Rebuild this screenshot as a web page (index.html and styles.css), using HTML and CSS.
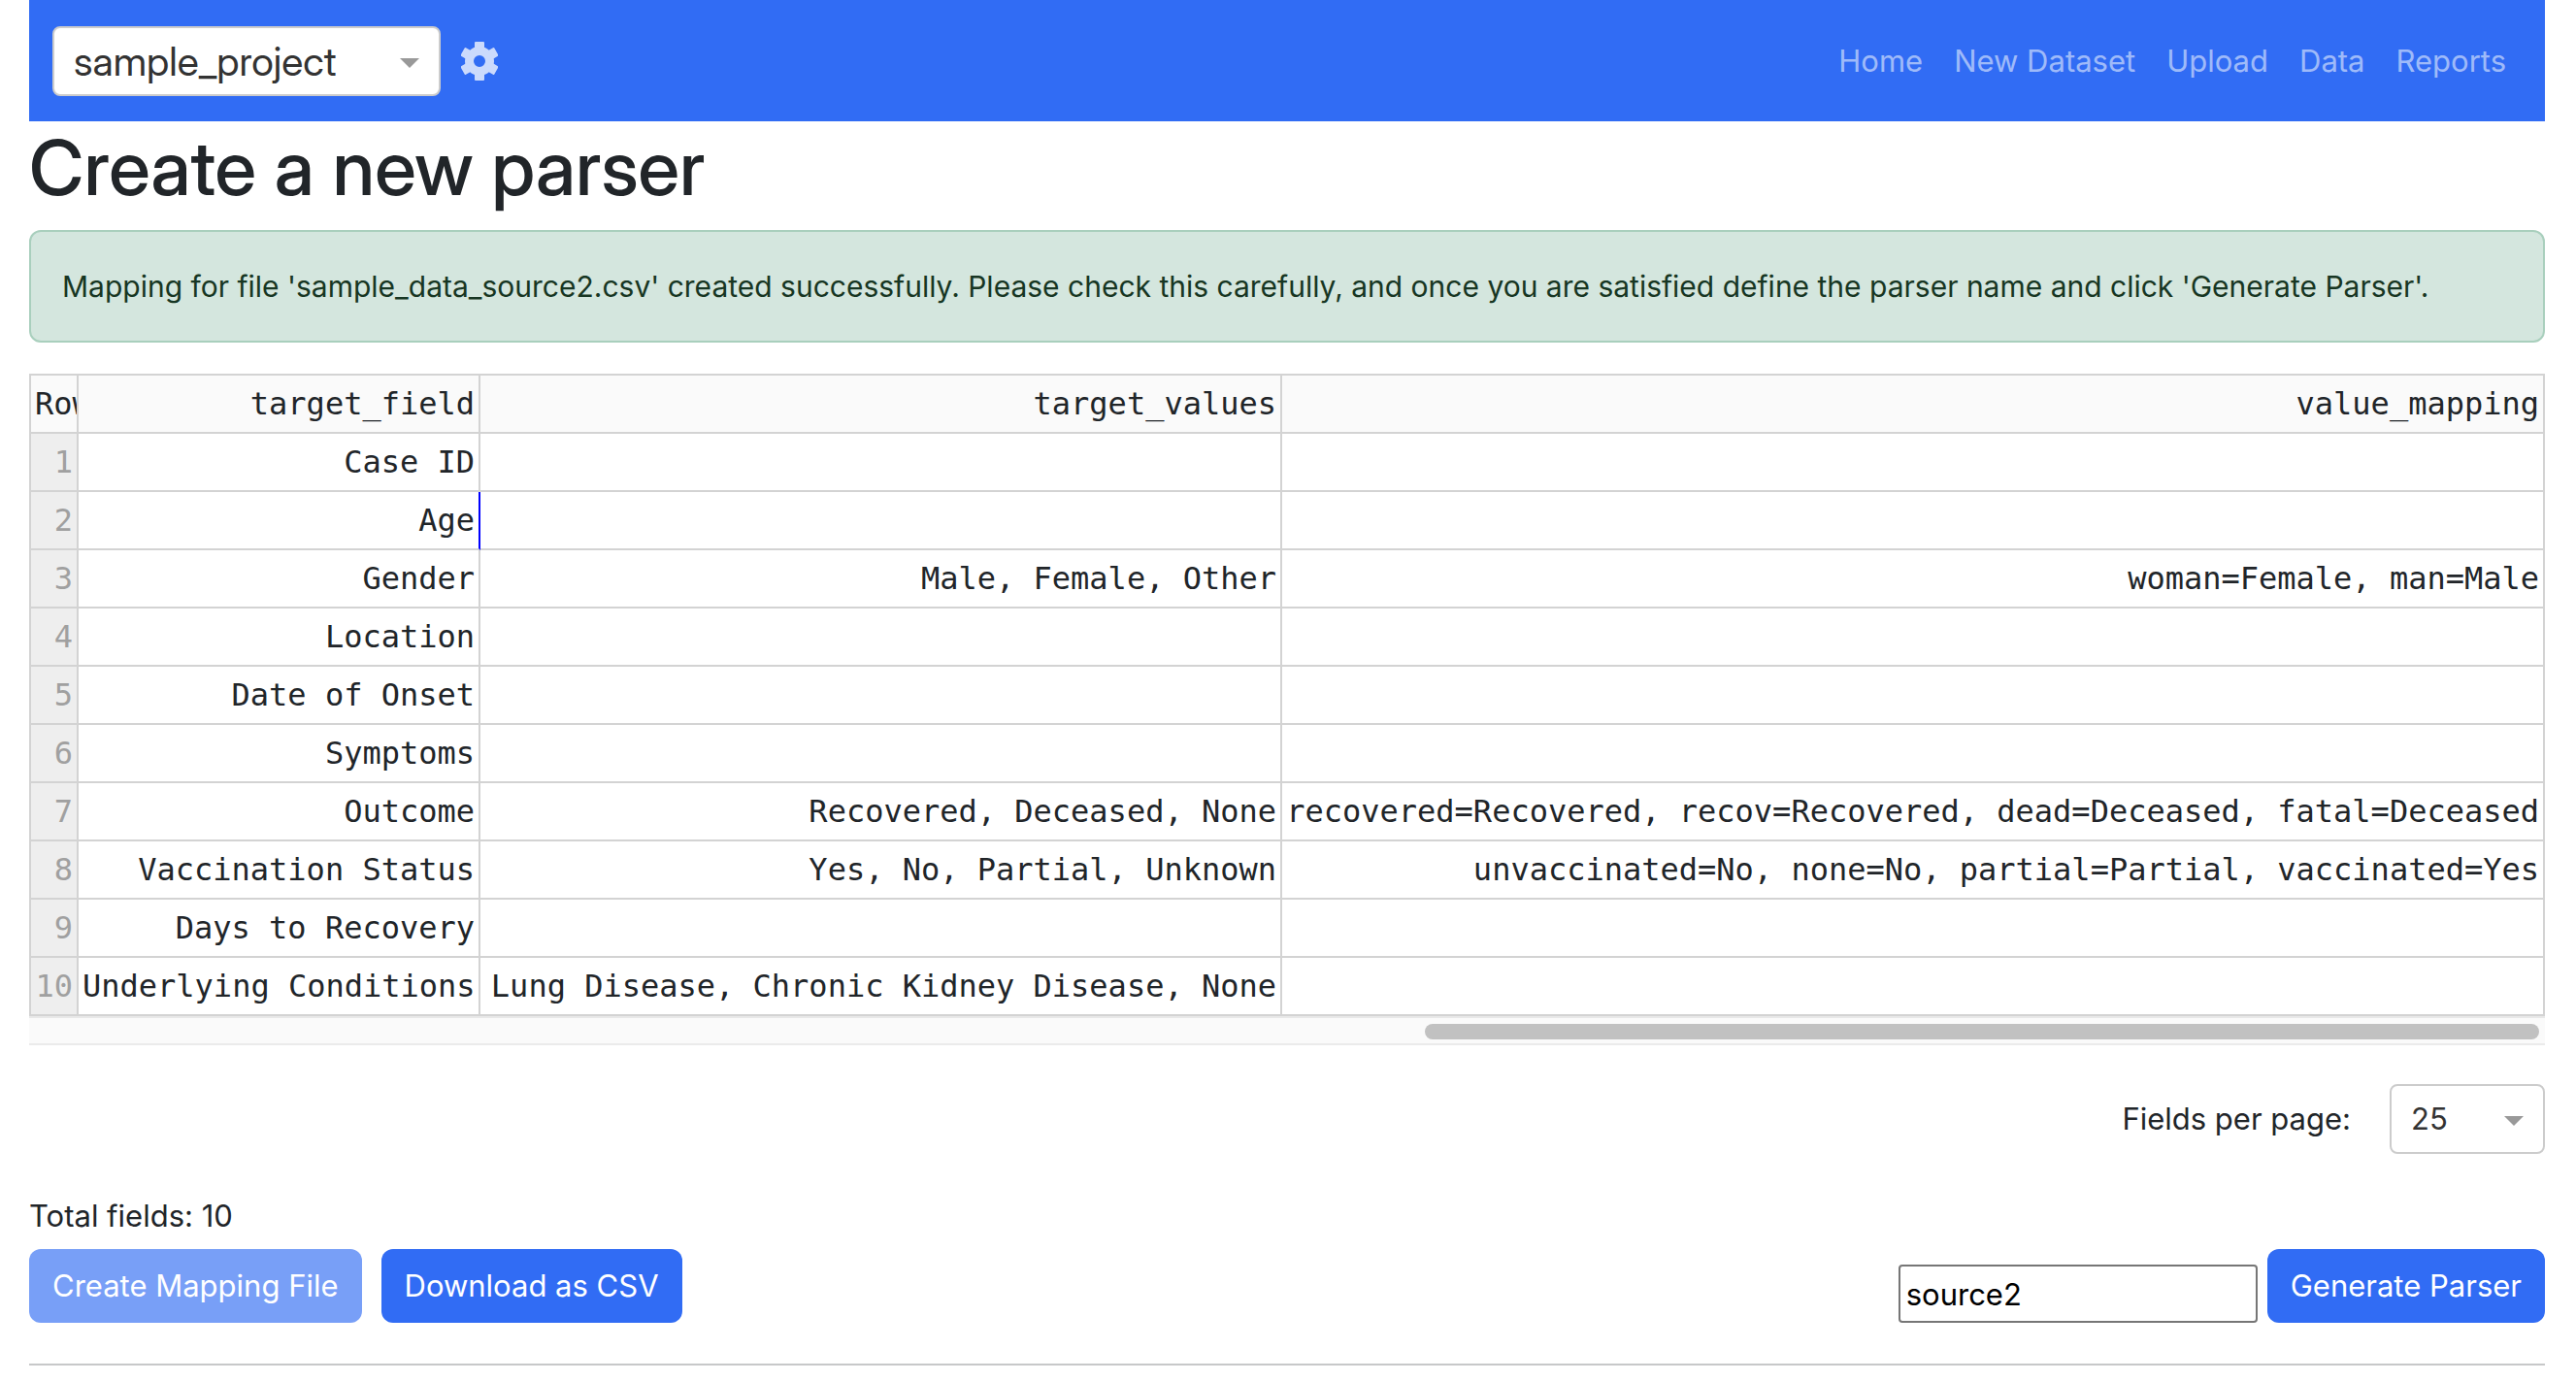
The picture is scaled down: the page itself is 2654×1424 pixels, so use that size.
FILE: index.html
```html
<!DOCTYPE html>
<html lang="en">
<head>
<meta charset="utf-8">
<meta name="viewport" content="width=device-width, initial-scale=1">
<title>Create a new parser</title>
<link rel="stylesheet" href="styles.css">
</head>
<body>
<header class="navbar">
  <div class="project">
    <span class="dropdown dropdown-project">
      <select aria-label="Project"><option>sample_project</option></select>
      <svg class="caret" viewBox="0 0 20 10" aria-hidden="true"><path d="M0 0h20L10 10z"/></svg>
    </span>
    <a class="settings" href="#" aria-label="Settings">
      <svg viewBox="-57 -60 114 120" aria-hidden="true">
        <circle r="31.5" fill="none" stroke="#fff" stroke-width="27"/>
        <g fill="#fff">
          <rect x="-15" y="-60" width="30" height="30" rx="3"/>
          <rect x="-15" y="-60" width="30" height="30" rx="3" transform="rotate(60)"/>
          <rect x="-15" y="-60" width="30" height="30" rx="3" transform="rotate(120)"/>
          <rect x="-15" y="-60" width="30" height="30" rx="3" transform="rotate(180)"/>
          <rect x="-15" y="-60" width="30" height="30" rx="3" transform="rotate(240)"/>
          <rect x="-15" y="-60" width="30" height="30" rx="3" transform="rotate(300)"/>
        </g>
      </svg>
    </a>
  </div>
  <nav class="links">
    <a href="#">Home</a>
    <a href="#">New Dataset</a>
    <a href="#">Upload</a>
    <a href="#">Data</a>
    <a href="#">Reports</a>
  </nav>
</header>
<main>
  <h1>Create a new parser</h1>
  <div class="alert" role="status">Mapping for file 'sample_data_source2.csv' created successfully. Please check this carefully, and once you are satisfied define the parser name and click 'Generate Parser'.</div>
  <div class="table-view">
    <table>
      <colgroup><col class="col-row"><col class="col-field"><col class="col-values"><col></colgroup>
      <thead>
        <tr><th class="row-head" scope="col">Row</th><th scope="col">target_field</th><th scope="col">target_values</th><th scope="col">value_mapping</th></tr>
      </thead>
      <tbody>
        <tr><th scope="row">1</th><td>Case ID</td><td></td><td></td></tr>
        <tr><th scope="row">2</th><td class="active">Age</td><td></td><td></td></tr>
        <tr><th scope="row">3</th><td>Gender</td><td>Male, Female, Other</td><td>woman=Female, man=Male</td></tr>
        <tr><th scope="row">4</th><td>Location</td><td></td><td></td></tr>
        <tr><th scope="row">5</th><td>Date of Onset</td><td></td><td></td></tr>
        <tr><th scope="row">6</th><td>Symptoms</td><td></td><td></td></tr>
        <tr><th scope="row">7</th><td>Outcome</td><td>Recovered, Deceased, None</td><td>recovered=Recovered, recov=Recovered, dead=Deceased, fatal=Deceased</td></tr>
        <tr><th scope="row">8</th><td>Vaccination Status</td><td>Yes, No, Partial, Unknown</td><td>unvaccinated=No, none=No, partial=Partial, vaccinated=Yes</td></tr>
        <tr><th scope="row">9</th><td>Days to Recovery</td><td></td><td></td></tr>
        <tr><th scope="row">10</th><td>Underlying Conditions</td><td>Lung Disease, Chronic Kidney Disease, None</td><td></td></tr>
      </tbody>
    </table>
    <div class="scroll-track"><div class="scroll-thumb"></div></div>
  </div>
  <div class="page-size">
    <label for="page-size">Fields per page:</label>
    <span class="dropdown dropdown-size">
      <select id="page-size"><option>25</option></select>
      <svg class="caret" viewBox="0 0 20 10" aria-hidden="true"><path d="M0 0h20L10 10z"/></svg>
    </span>
  </div>
  <p class="total">Total fields: 10</p>
  <div class="actions">
    <button class="btn" type="button" disabled>Create Mapping File</button>
    <button class="btn" type="button">Download as CSV</button>
    <div class="generate">
      <input type="text" value="source2" aria-label="Parser name">
      <button class="btn" type="button">Generate Parser</button>
    </div>
  </div>
  <hr>
</main>
</body>
</html>
```
FILE: styles.css
```css
* { box-sizing: border-box; }

body {
  margin: 0;
  padding: 0 32px 0 30px;
  background: #fff;
  color: #212529;
  font: 31px/48px Inter, "Liberation Sans", sans-serif;
}

.navbar {
  display: flex;
  align-items: center;
  justify-content: space-between;
  height: 125px;
  padding: 0 24px;
  background: #316cf4;
}
.project { display: flex; align-items: center; gap: 21px; }

.dropdown { display: inline-grid; align-items: center; }
.dropdown select, .caret { grid-area: 1 / 1; }
.dropdown select {
  appearance: none;
  width: 100%;
  height: 72px;
  padding: 0 20px;
  border: 2px solid #ccc;
  border-radius: 8px;
  background: #fff;
  color: #333;
  font: inherit;
}
.dropdown-project {
  width: 400px;
  font-family: "Inter Display", Inter, sans-serif;
  font-size: 41px;
}
.dropdown-size { width: 160px; }
.caret {
  justify-self: end;
  width: 20px;
  height: 10px;
  margin: 4px 22px 0 0;
  fill: #999;
  pointer-events: none;
}
.settings { opacity: .75; }
.settings svg { display: block; width: 38px; height: 40px; }

.links { display: flex; gap: 32px; padding-right: 16px; }
.links a { color: rgba(255, 255, 255, .55); text-decoration: none; }

h1 {
  margin: 0 0 16px;
  font-family: "Inter Display", Inter, sans-serif;
  font-size: 78px;
  line-height: 96px;
  font-weight: 500;
}

.alert {
  margin-bottom: 32px;
  padding: 32px;
  border: 2px solid #a9cfbd;
  border-radius: 12px;
  background: #d4e6de;
  color: #173623;
  font-size: 30px;
}

table {
  width: 100%;
  table-layout: fixed;
  border-collapse: separate;
  border-spacing: 0;
  border-top: 2px solid #d3d3d3;
  border-left: 2px solid #d3d3d3;
  font-family: "DejaVu Sans Mono", monospace;
  font-size: 32px;
}
.col-row { width: 49px; }
.col-field { width: 414px; }
.col-values { width: 826px; }
th, td {
  height: 60px;
  padding: 0 4px;
  border-right: 2px solid #d3d3d3;
  border-bottom: 2px solid #d3d3d3;
  font-weight: 400;
  text-align: right;
  white-space: nowrap;
  overflow: hidden;
}
thead th { background: #fafafa; }
thead .row-head { text-align: left; }
tbody th { background: #eee; color: #a0a0a0; }
.active { border-right-color: #00f; }

.scroll-track {
  display: flex;
  justify-content: flex-end;
  align-items: center;
  height: 30px;
  padding: 2px 6px 0 0;
  border-top: 2px solid #e8e8e8;
  border-bottom: 2px solid #ebebeb;
  background: #fafafa;
}
.scroll-thumb {
  width: 44.4%;
  height: 16px;
  border-radius: 8px;
  background: #c1c1c1;
}

.page-size {
  display: flex;
  align-items: center;
  justify-content: flex-end;
  gap: 40px;
  margin-top: 40px;
}
.total { margin: 40px 0 10px; }

.actions { display: flex; gap: 20px; }
.btn {
  height: 76px;
  padding: 0 24px;
  border: 0;
  border-radius: 12px;
  background: #316cf4;
  color: #fff;
  font: inherit;
  white-space: nowrap;
}
.btn:disabled { opacity: .65; }
.generate { display: flex; align-items: flex-end; gap: 10px; margin-left: auto; }
.generate input {
  width: 370px;
  height: 60px;
  padding: 2px 6px;
  border: 2px solid #767676;
  border-radius: 4px;
  background: #fff;
  color: #000;
  font: inherit;
}

hr {
  height: 2px;
  margin: 42px 0 0;
  border: 0;
  background: #c7c8c9;
}
```
